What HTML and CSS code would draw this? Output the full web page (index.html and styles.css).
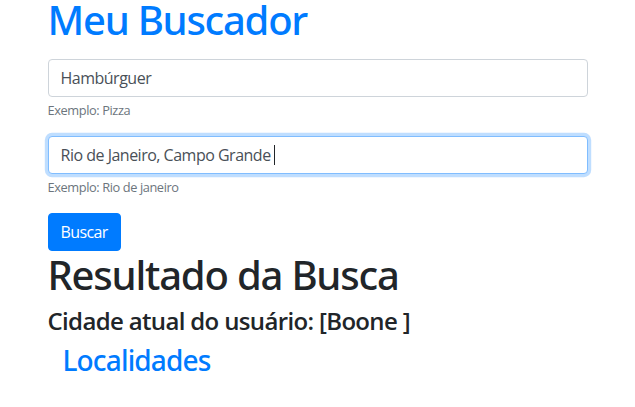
FILE: index.html
```html
<!DOCTYPE html>
<html lang="pt-BR">
<head>
<meta charset="utf-8">
<title>Meu Buscador</title>
<link rel="stylesheet" href="styles.css">
</head>
<body>
<div class="container">
  <h1 class="title">Meu Buscador</h1>
  <form class="search-form">
    <div class="form-group">
      <input class="form-control" type="text" value="Hambúrguer">
      <small class="form-text">Exemplo: Pizza</small>
    </div>
    <div class="form-group caret-group">
      <input class="form-control is-focused" type="text" value="Rio de Janeiro, Campo Grande">
      <span class="caret"></span>
      <small class="form-text">Exemplo: Rio de janeiro</small>
    </div>
    <button class="btn-primary" type="button">Buscar</button>
  </form>
  <h1 class="result-title">Resultado da Busca</h1>
  <h4 class="city">Cidade atual do usuário: [Boone ]</h4>
  <div class="places">
    <h3 class="places-title">Localidades</h3>
  </div>
</div>
</body>
</html>
```
FILE: styles.css
```css
* { box-sizing: border-box; }
html, body { margin: 0; padding: 0; background: #fff; }
body {
  font-family: "Open Sans", "Noto Sans", sans-serif;
  font-size: 16px;
  line-height: 1.5;
  color: #212529;
}
.container {
  width: 540px;
  margin: 0 auto;
}
h1, h3, h4 {
  font-family: "Noto Sans", "Open Sans", sans-serif;
  font-weight: 500;
  line-height: 1.2;
  margin: 0 0 8px;
}
.title {
  font-size: 40px;
  line-height: 39px;
  color: #007bff;
  letter-spacing: -1.25px;
  margin: 0 0 20px;
}
.search-form { margin: 0; }
.form-group { margin-bottom: 16px; }
.caret-group { position: relative; }
.caret {
  position: absolute;
  left: 226px;
  top: 9px;
  width: 1px;
  height: 20px;
  background: #212529;
}
.form-control {
  display: block;
  width: 100%;
  height: 38px;
  padding: 6px 12px;
  font-family: inherit;
  font-size: 16px;
  line-height: 1.5;
  letter-spacing: -0.5px;
  color: #495057;
  background: #fff;
  border: 1px solid #ced4da;
  border-radius: 4px;
  outline: none;
}
.form-control.is-focused {
  border-color: #80bdff;
  box-shadow: 0 0 0 3.2px rgba(0, 123, 255, 0.25);
}
.form-text {
  display: block;
  margin-top: 4px;
  font-size: 12.8px;
  line-height: 1.5;
  letter-spacing: -0.4px;
  color: #6c757d;
}
.btn-primary {
  display: block;
  height: 38px;
  padding: 6px 12px;
  font-family: inherit;
  font-size: 16px;
  line-height: 1.5;
  letter-spacing: -0.6px;
  color: #fff;
  background: #007bff;
  border: 1px solid #007bff;
  border-radius: 4px;
}
.result-title {
  font-size: 40px;
  color: #212529;
  letter-spacing: -1.2px;
}
.city {
  font-family: "Open Sans", sans-serif;
  font-size: 24px;
  font-weight: 600;
  letter-spacing: -0.65px;
}
.places { padding-left: 15px; }
.places-title {
  font-size: 28px;
  color: #007bff;
  letter-spacing: -0.85px;
}
```
